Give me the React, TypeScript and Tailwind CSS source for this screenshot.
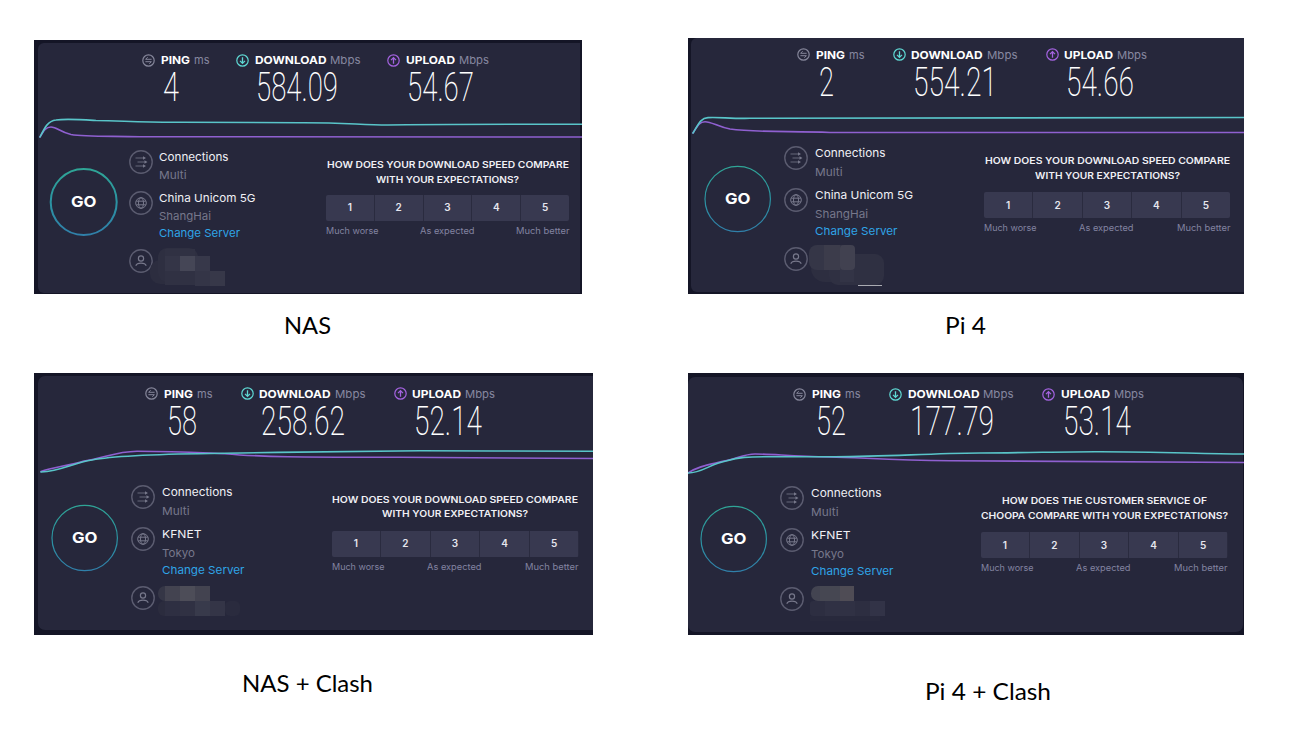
import { useLayoutEffect, useRef, useState } from "react";
import type { ReactNode } from "react";

/** One line of text, stretched or condensed to the width of its box. */
function Fit({ className, children }: { className: string; children: ReactNode }) {
  const box = useRef<HTMLSpanElement>(null);
  const text = useRef<HTMLSpanElement>(null);
  const [ratio, setRatio] = useState(1);
  useLayoutEffect(() => {
    if (box.current && text.current) {
      setRatio(box.current.getBoundingClientRect().width / text.current.getBoundingClientRect().width);
    }
  }, []);
  return (
    <span ref={box} className={`flex shrink-0 items-center ${className}`}>
      <span
        ref={text}
        className="shrink-0 origin-left whitespace-nowrap"
        style={{ transform: `scaleX(${ratio})` }}
      >
        {children}
      </span>
    </span>
  );
}

type Cell = [x: number, y: number, w: number, h: number, fill: string, rx?: number];

interface Panel {
  id: string;
  frame: string;
  surface: string;
  header: string;
  pingCol: string;
  downCol: string;
  ping: string;
  pingBox: string;
  down: string;
  downBox: string;
  up: string;
  upBox: string;
  chart: string;
  chartBox: string;
  downLine: string;
  upLine: string;
  go: string;
  goRing: number;
  goStroke: number;
  list: string;
  row: string;
  sub: string;
  serverRow: string;
  provider: string;
  providerBox: string;
  city: string;
  cityBox: string;
  connBox: string;
  changeBox: string;
  mask: string;
  cells: Cell[];
  survey: string;
  q1: string;
  q1Box: string;
  q2: string;
  q2Box: string;
  buttons: string;
}

const nas: Panel = {
  id: "nas",
  frame: "w-[548px] h-[254px]",
  surface: "ml-[4px] mt-[3px] mr-[2px] mb-[1px] rounded-l-[6px]",
  header: "h-[70px] pt-[13px] pl-[108px]",
  pingCol: "w-[94px]",
  downCol: "w-[151px]",
  ping: "4",
  pingBox: "ml-[21px] w-[16px]",
  down: "584.09",
  downBox: "ml-[20px] w-[82px]",
  up: "54.67",
  upBox: "ml-[20px] w-[67px]",
  chart: "34 110 548 35",
  chartBox: "w-[548px] h-[35px]",
  downLine: "M40 137C45 127 48 121 56 120C66 118.500 80 119.500 96 120.500C125 121 140 122.500 180 122.300L300 122.700C345 122.500 360 125 388 125C430 124 500 124.300 582 124.200",
  upLine: "M40 137C44 130 46 127 51 127C57 127 60 132 71 134.500C85 137 110 136 140 136.700L582 137",
  go: "ml-[14.5px] mt-[22px]",
  goRing: 33,
  goStroke: 2,
  list: "ml-[10px] pt-[5px] w-[197.5px]",
  row: "gap-[6px] h-[41px]",
  sub: "h-[23px]",
  serverRow: "gap-[6px] h-[57.5px]",
  provider: "China Unicom 5G",
  providerBox: "w-[96.5px]",
  city: "ShangHai",
  cityBox: "w-[52px]",
  connBox: "w-[69.5px]",
  changeBox: "w-[81px]",
  mask: "-ml-[3px] -mt-[3px]",
  cells: [
    [0, 14, 50, 24, "#2c2d3f", 10],
    [8, 2, 40, 34, "#2e2f41", 9],
    [15, 3, 30, 36, "#303143"],
    [15, 10, 15, 15, "#343547"],
    [30, 10, 15, 15, "#454656"],
    [45, 10, 15, 15, "#37384a"],
    [45, 25, 15, 15, "#343547"],
    [60, 25, 15, 15, "#373849"],
  ],
  survey: "pt-[13px] w-[243px]",
  q1: "HOW DOES YOUR DOWNLOAD SPEED COMPARE",
  q1Box: "w-[242px]",
  q2: "WITH YOUR EXPECTATIONS?",
  q2Box: "w-[143px]",
  buttons: "mt-[8px] h-[25.5px]",
};

const pi: Panel = {
  ...nas,
  id: "pi",
  frame: "w-[556px] h-[256px]",
  surface: "ml-[3px] mb-[2px] rounded-l-[6px]",
  header: "h-[67px] pt-[9.5px] pl-[109px]",
  pingCol: "w-[95.5px]",
  downCol: "w-[153px]",
  ping: "2",
  pingBox: "ml-[21.5px] w-[15px]",
  down: "554.21",
  downBox: "ml-[20px] w-[84px]",
  up: "54.66",
  upBox: "ml-[20.5px] w-[68px]",
  chart: "688 105 556 35",
  chartBox: "w-[556px] h-[35px]",
  downLine: "M693 133C699 123 701 118 708 117.600C720 117 730 118.700 750 118.300C800 117.500 900 117.700 1244 117.500",
  upLine: "M693 133C698 125 700 121.700 705 121.700C712 121.700 718 127 730 129C755 132.500 790 131 830 132.500L1244 132.500",
  go: "ml-[14.5px] mt-[24px]",
  goRing: 32.7,
  goStroke: 1.2,
  list: "ml-[11px] pt-[6px] w-[200.5px]",
  row: "gap-[7px] h-[42px]",
  sub: "h-[24px]",
  serverRow: "gap-[7px] h-[58.5px]",
  providerBox: "w-[98px]",
  cityBox: "w-[53px]",
  connBox: "w-[70.5px]",
  changeBox: "w-[82.5px]",
  mask: "ml-[1px] -mt-[2px]",
  cells: [
    [2, 8, 54, 29, "#2d2e40", 14],
    [20, 9, 55, 31, "#2f3042", 9],
    [0, 0, 44, 25, "#353647", 8],
    [15, 0, 16, 25, "#3c3c4b"],
    [31, 0, 15, 25, "#414150", 4],
    [31, 25, 14, 12, "#333446"],
    [49, 40, 24, 1, "#aaabb2"],
  ],
  survey: "pt-[14px] w-[246px]",
  q1Box: "w-[245px]",
  q2Box: "w-[145px]",
  buttons: "mt-[9px] h-[26px]",
};

const nasClash: Panel = {
  ...pi,
  id: "nas-clash",
  frame: "w-[559px] h-[262px]",
  surface: "ml-[4px] mt-[3px] mb-[5px] rounded-l-[7px]",
  header: "h-[70px] pt-[13.5px] pl-[111px]",
  ping: "58",
  pingBox: "ml-[21.5px] w-[30px]",
  down: "258.62",
  downBox: "ml-[20.5px] w-[84px]",
  up: "52.14",
  upBox: "ml-[20.5px] w-[68px]",
  chart: "34 443 559 37",
  chartBox: "w-[559px] h-[37px]",
  downLine: "M41 472C61 471 73 463 92 460C110 456.500 150 454.300 210 453.500C280 452.300 340 451.200 420 450.800C480 450.600 530 451.600 593 451.200",
  upLine: "M41 471.500C53 467 68 466 84 461C105 458 115 451.500 137 451.200C180 451.300 205 453 225 453.700C260 457 300 457.300 400 457.200L593 458.500",
  go: "ml-[15.5px] mt-[23px]",
  list: "ml-[11px] pt-[5px] w-[201px]",
  provider: "KFNET",
  providerBox: "w-[39.5px]",
  city: "Tokyo",
  cityBox: "w-[33px]",
  mask: "ml-[3px] mt-0",
  cells: [
    [0, 0, 22, 15, "#353646", 7],
    [0, 15, 22, 15, "#2b2c3e", 6],
    [7, 0, 15, 15, "#434350"],
    [22, 0, 15, 15, "#4d4d58"],
    [37, 0, 15, 15, "#434350"],
    [7, 15, 15, 15, "#2e2f42"],
    [22, 15, 15, 15, "#303143"],
    [37, 15, 15, 15, "#383a4b"],
    [52, 15, 15, 15, "#343547"],
    [67, 15, 15, 15, "#2a2b3e", 5],
  ],
  survey: "pt-[12.5px] w-[247px]",
  q1Box: "w-[246px]",
  q2Box: "w-[146px]",
  buttons: "mt-[9.5px] h-[25.5px]",
};

const piClash: Panel = {
  ...nasClash,
  id: "pi-clash",
  frame: "w-[556px] h-[262px]",
  surface: "mt-[4px] mr-[1px] mb-[3px] rounded-[7px]",
  header: "h-[70px] pt-[14px] pl-[105px]",
  ping: "52",
  pingBox: "ml-[22.5px] w-[30px]",
  pingCol: "w-[96px]",
  down: "177.79",
  up: "53.14",
  chart: "688 443 556 37",
  chartBox: "w-[556px] h-[37px]",
  downLine: "M688 473C702 473 710 464 726 461C740 457 748 456.700 765 456.700L835 456.700C890 456.500 925 453.500 980 453C1030 452.700 1070 451.500 1100 451.700C1160 451.700 1200 453.800 1244 454",
  upLine: "M688 473C698 466 710 464.500 724 461C736 459 744 454 755 454C775 454 790 456.500 830 457C860 457.500 890 460.300 950 460.700C1050 461 1150 462.300 1244 462.500",
  go: "ml-[10.5px] mt-[24px]",
  list: "ml-[11.5px] pt-[6px] w-[200.5px]",
  mask: "ml-[6px] -mt-[1px]",
  cells: [
    [0, 15, 75, 15, "#2d2e41", 3],
    [15, 15, 30, 15, "#303144"],
    [0, 30, 70, 5, "#28293c"],
    [1, 0, 20, 15, "#434451", 7],
    [10, 0, 20, 15, "#464752"],
    [30, 0, 14, 15, "#4f4c55"],
    [60, 15, 15, 15, "#323347"],
  ],
  survey: "pt-[14px] w-[247px]",
  q1: "HOW DOES THE CUSTOMER SERVICE OF",
  q1Box: "w-[205px]",
  q2: "CHOOPA COMPARE WITH YOUR EXPECTATIONS?",
  q2Box: "w-[247px]",
  buttons: "mt-[9px] h-[26px]",
};

function StatIcon({ kind }: { kind: "ping" | "down" | "up" }) {
  const color = kind === "ping" ? "#85869a" : kind === "down" ? "#5fd9d4" : "#a463e0";
  return (
    <svg className="size-[13px] shrink-0" viewBox="0 0 13 13" fill="none" stroke={color} strokeWidth="1.2">
      <circle cx="6.500" cy="6.500" r="5.700" />
      {kind === "ping" && <path d="M9.600 5.300H3.600L5.700 3.200M3.400 7.700H9.400L7.300 9.800" strokeWidth="1" />}
      {kind === "down" && <path d="M6.500 3.300V9.400M4 6.900L6.500 9.400L9 6.900" strokeWidth="1.300" />}
      {kind === "up" && <path d="M6.500 9.700V3.600M4 6.100L6.500 3.600L9 6.100" strokeWidth="1.300" />}
    </svg>
  );
}

interface StatProps {
  kind: "ping" | "down" | "up";
  name: string;
  nameBox: string;
  unit: string;
  unitBox: string;
  value: string;
  valueBox: string;
  col: string;
}

function Stat({ kind, name, nameBox, unit, unitBox, value, valueBox, col }: StatProps) {
  return (
    <div className={`shrink-0 ${col}`}>
      <div className="flex h-[14px] items-center text-[11px] leading-[14px]">
        <StatIcon kind={kind} />
        <Fit className={`ml-[5.5px] font-bold text-white ${nameBox}`}>{name}</Fit>
        <Fit className={`ml-[4px] text-[#8788a0] ${unitBox}`}>{unit}</Fit>
      </div>
      <Fit className={`mt-[5px] h-[30px] font-['Roboto'] text-[41.5px] leading-[30px] font-extralight text-white ${valueBox}`}>
        {value}
      </Fit>
    </div>
  );
}

function InfoIcon({ kind }: { kind: "connections" | "globe" | "person" }) {
  return (
    <svg className="size-[24px] shrink-0" viewBox="0 0 24 24" fill="none" stroke="#77788b" strokeWidth="1">
      <circle cx="12" cy="12" r="11.200" stroke="#5b5c70" strokeWidth="1.400" />
      {kind === "connections" && (
        <g>
          <path d="M6.500 8H15M8.500 12H17M6.500 16H15" strokeWidth="0.8" />
          <path d="M14 6.200L17 8L14 9.800ZM15.500 10.200L18.500 12L15.500 13.800ZM14 14.200L17 16L14 17.800Z" fill="#77788b" stroke="none" />
        </g>
      )}
      {kind === "globe" && (
        <g>
          <circle cx="12" cy="12" r="5.300" />
          <ellipse cx="12" cy="12" rx="2.500" ry="5.300" />
          <path d="M7.300 10.200H16.700M7.300 13.800H16.700" />
        </g>
      )}
      {kind === "person" && (
        <g strokeWidth="1.200">
          <circle cx="12" cy="9.500" r="2.600" />
          <path d="M6.800 16.800C7.500 14.800 9.500 14.200 12 14.200C14.500 14.200 16.500 14.800 17.200 16.800" />
        </g>
      )}
    </svg>
  );
}

function SpeedPanel({ p }: { p: Panel }) {
  return (
    <section className={`grid shrink-0 overflow-hidden bg-[#141526] ${p.frame}`}>
      <div className={`bg-[#26273b] [grid-area:1/1] ${p.surface}`} />
      <div className="flex flex-col [grid-area:1/1]">
        <header className={`flex shrink-0 ${p.header}`}>
          <Stat kind="ping" name="PING" nameBox="w-[29px]" unit="ms" unitBox="w-[15.5px]" value={p.ping} valueBox={p.pingBox} col={p.pingCol} />
          <Stat kind="down" name="DOWNLOAD" nameBox="w-[71.5px]" unit="Mbps" unitBox="w-[30.5px]" value={p.down} valueBox={p.downBox} col={p.downCol} />
          <Stat kind="up" name="UPLOAD" nameBox="w-[49px]" unit="Mbps" unitBox="w-[30px]" value={p.up} valueBox={p.upBox} col="w-[110px]" />
        </header>

        <svg className={`shrink-0 ${p.chartBox}`} viewBox={p.chart} fill="none" strokeWidth="1.600" strokeLinecap="round">
          <path d={p.upLine} stroke="#8f60d0" />
          <path d={p.downLine} stroke="#59c5c9" />
        </svg>

        <div className="flex items-start">
          <div className={`grid size-[70px] shrink-0 place-items-center ${p.go}`}>
            <svg className="size-[70px] [grid-area:1/1]" viewBox="0 0 70 70" fill="none">
              <defs>
                <linearGradient id={`ring-${p.id}`} x1="0" y1="0" x2="0" y2="1">
                  <stop offset="0" stopColor="#2fa596" />
                  <stop offset="0.500" stopColor="#2b93a2" />
                  <stop offset="1" stopColor="#3080aa" />
                </linearGradient>
              </defs>
              <circle cx="34.700" cy="35" r={p.goRing} stroke={`url(#ring-${p.id})`} strokeWidth={p.goStroke} />
            </svg>
            <Fit className="w-[25.5px] text-[15px] leading-[18px] font-bold text-white [grid-area:1/1]">GO</Fit>
          </div>

          <div className={`shrink-0 text-[11px] ${p.list}`}>
            <div className={`flex items-start ${p.row}`}>
              <InfoIcon kind="connections" />
              <div>
                <Fit className={`h-[14px] text-[#f0f0f5] ${p.connBox}`}>Connections</Fit>
                <Fit className={`w-[27.5px] text-[#77788b] ${p.sub}`}>Multi</Fit>
              </div>
            </div>
            <div className={`flex items-start ${p.serverRow}`}>
              <InfoIcon kind="globe" />
              <div>
                <Fit className={`h-[14px] text-[#f0f0f5] ${p.providerBox}`}>{p.provider}</Fit>
                <Fit className={`text-[#77788b] ${p.sub} ${p.cityBox}`}>{p.city}</Fit>
                <Fit className={`h-[11px] text-[#2fa4e7] ${p.changeBox}`}>Change Server</Fit>
              </div>
            </div>
            <div className="flex h-[24px] items-start">
              <InfoIcon kind="person" />
              <svg className={`h-[42px] w-[84px] shrink-0 ${p.mask}`} viewBox="0 0 84 42">
                {p.cells.map(([x, y, w, h, fill, rx], i) => (
                  <rect key={i} x={x} y={y} width={w} height={h} rx={rx ?? 0} fill={fill} />
                ))}
              </svg>
            </div>
          </div>

          <div className={`flex shrink-0 flex-col items-center ${p.survey}`}>
            <Fit className={`h-[14.5px] text-[9.5px] font-semibold text-[#f0f0f5] ${p.q1Box}`}>{p.q1}</Fit>
            <Fit className={`h-[14.5px] text-[9.5px] font-semibold text-[#f0f0f5] ${p.q2Box}`}>{p.q2}</Fit>
            <div className={`flex w-full shrink-0 gap-px overflow-hidden rounded-[2px] bg-[#2a2b3f] text-[10px] font-semibold text-[#e6e6ee] ${p.buttons}`}>
              {[1, 2, 3, 4, 5].map((n) => (
                <button key={n} className="flex-1 bg-[#383950]">
                  {n}
                </button>
              ))}
            </div>
            <div className="flex h-[21px] w-full justify-between text-[8.5px] text-[#8283a0]">
              <Fit className="w-[52.5px]">Much worse</Fit>
              <Fit className="w-[54.5px]">As expected</Fit>
              <Fit className="w-[53.5px]">Much better</Fit>
            </div>
          </div>
        </div>
      </div>
    </section>
  );
}

function Caption({ className, children }: { className: string; children: ReactNode }) {
  return <Fit className={`h-[32px] font-['Lato'] text-[23px] leading-[32px] text-black ${className}`}>{children}</Fit>;
}

export default function App() {
  return (
    <main className="flex h-[741px] w-[1292px] items-start overflow-hidden bg-white pl-[34px] font-['Inter',sans-serif]">
      <div className="flex w-[654px] shrink-0 flex-col items-start pt-[40px]">
        <SpeedPanel p={nas} />
        <Caption className="mt-[15px] ml-[250px] w-[47px]">NAS</Caption>
        <div className="h-[32px]" />
        <SpeedPanel p={nasClash} />
        <Caption className="mt-[32px] ml-[208px] w-[131px]">NAS + Clash</Caption>
      </div>
      <div className="flex shrink-0 flex-col items-start pt-[38px]">
        <SpeedPanel p={pi} />
        <Caption className="mt-[15px] ml-[257px] w-[41px]">Pi 4</Caption>
        <div className="h-[32px]" />
        <SpeedPanel p={piClash} />
        <Caption className="mt-[40px] ml-[237px] w-[126px]">Pi 4 + Clash</Caption>
      </div>
    </main>
  );
}
